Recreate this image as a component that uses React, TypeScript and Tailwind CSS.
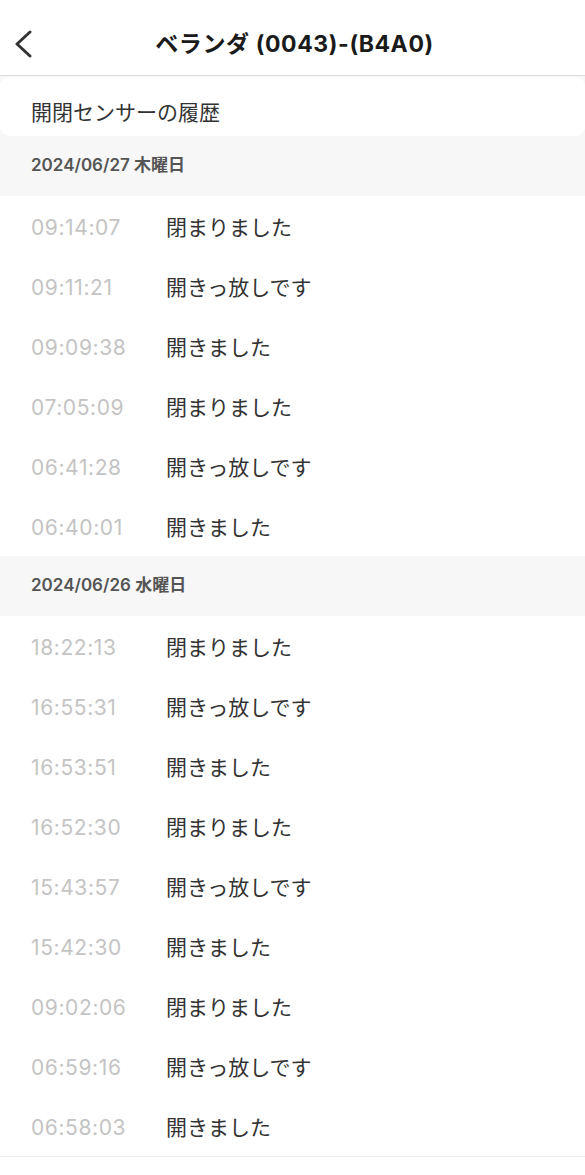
const font = "font-['Inter','Noto_Sans_CJK_JP',sans-serif]";

type Entry = { time: string; label: string };

const groups: { date: string; entries: Entry[] }[] = [
  {
    date: '2024/06/27 木曜日',
    entries: [
      { time: '09:14:07', label: '閉まりました' },
      { time: '09:11:21', label: '開きっ放しです' },
      { time: '09:09:38', label: '開きました' },
      { time: '07:05:09', label: '閉まりました' },
      { time: '06:41:28', label: '開きっ放しです' },
      { time: '06:40:01', label: '開きました' },
    ],
  },
  {
    date: '2024/06/26 水曜日',
    entries: [
      { time: '18:22:13', label: '閉まりました' },
      { time: '16:55:31', label: '開きっ放しです' },
      { time: '16:53:51', label: '開きました' },
      { time: '16:52:30', label: '閉まりました' },
      { time: '15:43:57', label: '開きっ放しです' },
      { time: '15:42:30', label: '開きました' },
      { time: '09:02:06', label: '閉まりました' },
      { time: '06:59:16', label: '開きっ放しです' },
      { time: '06:58:03', label: '開きました' },
    ],
  },
];

export default function App() {
  return (
    <div className={`min-h-[1175px] w-[585px] bg-white ${font}`}>
      <header className="relative flex h-[76px] items-center justify-center border-b border-[#dcdcdc] bg-white pt-[14px]">
        <button className="absolute left-[12px] top-[30px] text-[#333]">
          <svg width="22" height="28" viewBox="0 0 22 28" fill="none">
            <path d="M18 2 L5 14 L18 26" stroke="currentColor" strokeWidth="3" strokeLinecap="round" strokeLinejoin="round" />
          </svg>
        </button>
        <h1 className="pl-[4px] text-[23px] font-bold tracking-[0.6px] text-[#1a1a1a]">ベランダ (0043)-(B4A0)</h1>
      </header>
      <div className="bg-[#f7f7f7] pt-px">
        <div className="flex h-[59px] items-center rounded-[9px] bg-white px-[31px] pt-[12px] text-[21px] text-[#333]">
          開閉センサーの履歴
        </div>
      </div>
      {groups.map((g) => (
        <section key={g.date}>
          <div className="flex h-[60px] items-center bg-[#f7f7f7] px-[31px] text-[17px] font-semibold text-[#555]">
            {g.date}
          </div>
          {g.entries.map((e, i) => (
            <div key={i} className="flex h-[60px] items-center px-[31px] pt-[3px] text-[21px]">
              <span className="w-[135px] tracking-[0.6px] text-[#c4c4c4]">{e.time}</span>
              <span className="text-[#333]">{e.label}</span>
            </div>
          ))}
        </section>
      ))}
      <div className="border-t border-[#f0f0f0]" />
    </div>
  );
}
